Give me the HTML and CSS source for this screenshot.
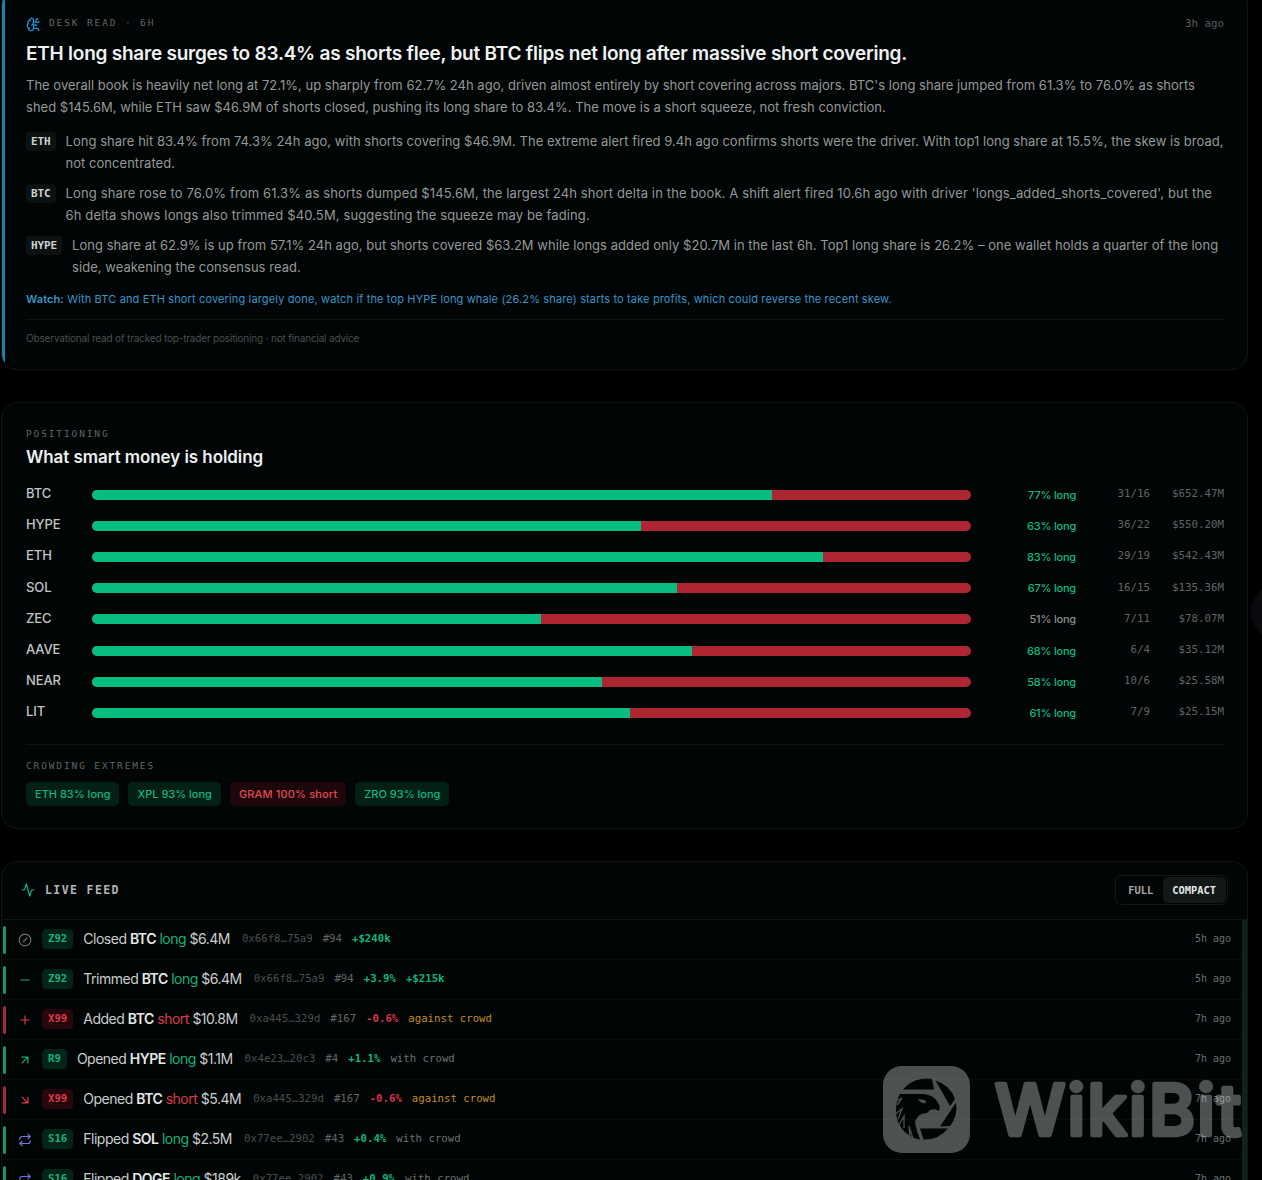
FILE: index.html
```html
<!DOCTYPE html>
<html lang="en">
<head>
  <meta charset="UTF-8">
  <meta name="viewport" content="width=device-width, initial-scale=1.0">
  <title>Smart Money Desk</title>
  <link rel="stylesheet" href="styles.css">
</head>
<body>
  <!-- Shared icons -->
  <svg class="sprite">
    <symbol id="i-brain" viewBox="0 0 24 24">
      <path d="M12 5a3 3 0 1 0-5.997.125 4 4 0 0 0-2.526 5.77 4 4 0 0 0 .556 6.588A4 4 0 1 0 12 18Z"/>
      <path d="M9 13a4.5 4.5 0 0 0 3-4M6 5.1a3 3 0 0 0 .4 1.4M3.5 10.9a4 4 0 0 1 .6-.4M6 18a4 4 0 0 1-2-.5"/>
      <path d="M12 13h4M12 18h6a2 2 0 0 1 2 2v1M12 8h8M16 8V5a2 2 0 0 1 2-2"/>
      <circle cx="16" cy="13" r=".5"/><circle cx="18" cy="3" r=".5"/><circle cx="20" cy="21" r=".5"/><circle cx="20" cy="8" r=".5"/>
    </symbol>
    <symbol id="i-activity" viewBox="0 0 24 24"><path d="M22 12h-2.48a2 2 0 0 0-1.93 1.46l-2.35 8.36a.25.25 0 0 1-.48 0L9.24 2.18a.25.25 0 0 0-.48 0l-2.35 8.36A2 2 0 0 1 4.49 12H2"/></symbol>
    <symbol id="i-closed" viewBox="0 0 24 24"><circle cx="12" cy="12" r="10"/><path d="m9 15 6-6"/></symbol>
    <symbol id="i-minus" viewBox="0 0 24 24"><path d="M5 12h14"/></symbol>
    <symbol id="i-plus" viewBox="0 0 24 24"><path d="M5 12h14M12 5v14"/></symbol>
    <symbol id="i-up" viewBox="0 0 24 24"><path d="M7 7h10v10M7 17 17 7"/></symbol>
    <symbol id="i-down" viewBox="0 0 24 24"><path d="m7 7 10 10M17 7v10H7"/></symbol>
    <symbol id="i-flip" viewBox="0 0 24 24"><path d="m17 2 4 4-4 4M3 11v-1a4 4 0 0 1 4-4h14M7 22l-4-4 4-4M21 13v1a4 4 0 0 1-4 4H3"/></symbol>
  </svg>

  <main class="page">
    <section class="card desk">
      <div class="desk-top">
        <svg class="icon desk-icon"><use href="#i-brain"/></svg>
        <span class="eyebrow">DESK READ · 6H</span>
        <span class="ago">3h ago</span>
      </div>
      <h1>ETH long share surges to 83.4% as shorts flee, but BTC flips net long after massive short covering.</h1>
      <p class="summary">The overall book is heavily net long at 72.1%, up sharply from 62.7% 24h ago, driven almost entirely by short covering across majors. BTC's long share jumped from 61.3% to 76.0% as shorts<br>shed $145.6M, while ETH saw $46.9M of shorts closed, pushing its long share to 83.4%. The move is a short squeeze, not fresh conviction.</p>
      <ul class="notes">
        <li><span class="tag">ETH</span><p>Long share hit 83.4% from 74.3% 24h ago, with shorts covering $46.9M. The extreme alert fired 9.4h ago confirms shorts were the driver. With top1 long share at 15.5%, the skew is broad,<br>not concentrated.</p></li>
        <li><span class="tag">BTC</span><p class="wide">Long share rose to 76.0% from 61.3% as shorts dumped $145.6M, the largest 24h short delta in the book. A shift alert fired 10.6h ago with driver 'longs_added_shorts_covered', but the<br>6h delta shows longs also trimmed $40.5M, suggesting the squeeze may be fading.</p></li>
        <li><span class="tag">HYPE</span><p>Long share at 62.9% is up from 57.1% 24h ago, but shorts covered $63.2M while longs added only $20.7M in the last 6h. Top1 long share is 26.2% – one wallet holds a quarter of the long<br>side, weakening the consensus read.</p></li>
      </ul>
      <p class="watch"><b>Watch:</b> With BTC and ETH short covering largely done, watch if the top HYPE long whale (26.2% share) starts to take profits, which could reverse the recent skew.</p>
      <p class="disclaimer">Observational read of tracked top-trader positioning · not financial advice</p>
    </section>

    <section class="card positioning">
      <div class="eyebrow">POSITIONING</div>
      <h2>What smart money is holding</h2>
      <div class="rows">
        <div class="row"><span class="coin">BTC</span><div class="bar"><div class="fill" style="width: 77.4%"></div></div><span class="pct">77% long</span><span class="num">31/16</span><span class="num">$652.47M</span></div>
        <div class="row"><span class="coin">HYPE</span><div class="bar"><div class="fill" style="width: 62.5%"></div></div><span class="pct">63% long</span><span class="num">36/22</span><span class="num">$550.20M</span></div>
        <div class="row"><span class="coin">ETH</span><div class="bar"><div class="fill" style="width: 83.2%"></div></div><span class="pct">83% long</span><span class="num">29/19</span><span class="num">$542.43M</span></div>
        <div class="row"><span class="coin">SOL</span><div class="bar"><div class="fill" style="width: 66.5%"></div></div><span class="pct">67% long</span><span class="num">16/15</span><span class="num">$135.36M</span></div>
        <div class="row"><span class="coin">ZEC</span><div class="bar"><div class="fill" style="width: 51.1%"></div></div><span class="pct neutral">51% long</span><span class="num">7/11</span><span class="num">$78.07M</span></div>
        <div class="row"><span class="coin">AAVE</span><div class="bar"><div class="fill" style="width: 68.3%"></div></div><span class="pct">68% long</span><span class="num">6/4</span><span class="num">$35.12M</span></div>
        <div class="row"><span class="coin">NEAR</span><div class="bar"><div class="fill" style="width: 58%"></div></div><span class="pct">58% long</span><span class="num">10/6</span><span class="num">$25.58M</span></div>
        <div class="row"><span class="coin">LIT</span><div class="bar"><div class="fill" style="width: 61.2%"></div></div><span class="pct">61% long</span><span class="num">7/9</span><span class="num">$25.15M</span></div>
      </div>
      <div class="extremes">
        <div class="eyebrow">CROWDING EXTREMES</div>
        <div class="pills">
          <span class="pill">ETH 83% long</span>
          <span class="pill">XPL 93% long</span>
          <span class="pill red">GRAM 100% short</span>
          <span class="pill">ZRO 93% long</span>
        </div>
      </div>
    </section>

    <section class="card feed">
      <header class="feed-top">
        <svg class="icon feed-icon"><use href="#i-activity"/></svg>
        <span class="feed-title">LIVE FEED</span>
        <div class="toggle"><button>FULL</button><button class="active">COMPACT</button></div>
      </header>
      <div class="feed-list">
        <div class="event long"><svg class="icon muted"><use href="#i-closed"/></svg><span class="badge">Z92</span><span class="what">Closed <b>BTC</b> <i>long</i> $6.4M</span><span class="addr">0x66f8…75a9</span><span class="rank">#94</span><span class="gain">+$240k</span><span class="time">5h ago</span></div>
        <div class="event long"><svg class="icon"><use href="#i-minus"/></svg><span class="badge">Z92</span><span class="what">Trimmed <b>BTC</b> <i>long</i> $6.4M</span><span class="addr">0x66f8…75a9</span><span class="rank">#94</span><span class="gain">+3.9%</span><span class="gain">+$215k</span><span class="time">5h ago</span></div>
        <div class="event short"><svg class="icon"><use href="#i-plus"/></svg><span class="badge">X99</span><span class="what">Added <b>BTC</b> <i>short</i> $10.8M</span><span class="addr">0xa445…329d</span><span class="rank">#167</span><span class="loss">-0.6%</span><span class="against">against crowd</span><span class="time">7h ago</span></div>
        <div class="event long"><svg class="icon"><use href="#i-up"/></svg><span class="badge">R9</span><span class="what">Opened <b>HYPE</b> <i>long</i> $1.1M</span><span class="addr">0x4e23…20c3</span><span class="rank">#4</span><span class="gain">+1.1%</span><span class="with">with crowd</span><span class="time">7h ago</span></div>
        <div class="event short"><svg class="icon"><use href="#i-down"/></svg><span class="badge">X99</span><span class="what">Opened <b>BTC</b> <i>short</i> $5.4M</span><span class="addr">0xa445…329d</span><span class="rank">#167</span><span class="loss">-0.6%</span><span class="against">against crowd</span><span class="time">7h ago</span></div>
        <div class="event long"><svg class="icon flip"><use href="#i-flip"/></svg><span class="badge">S16</span><span class="what">Flipped <b>SOL</b> <i>long</i> $2.5M</span><span class="addr">0x77ee…2902</span><span class="rank">#43</span><span class="gain">+0.4%</span><span class="with">with crowd</span><span class="time">7h ago</span></div>
        <div class="event long"><svg class="icon flip"><use href="#i-flip"/></svg><span class="badge">S16</span><span class="what">Flipped <b>DOGE</b> <i>long</i> $189k</span><span class="addr">0x77ee…2902</span><span class="rank">#43</span><span class="gain">+0.9%</span><span class="with">with crowd</span><span class="time">7h ago</span></div>
      </div>
    </section>
  </main>

  <div class="side-handle"></div>

  <svg class="watermark" viewBox="0 0 362 90">
    <defs>
      <mask id="eagle">
        <rect width="90" height="90" fill="#fff"/>
        <!-- shutter blades -->
        <path d="M21 24.500A30.300 30.300 0 0 1 50 14l2 10.500z"/>
        <path d="M53.500 15.500A30.300 30.300 0 0 1 73 34l-5 7z"/>
        <path d="M74 37.500A30.300 30.300 0 0 1 68 61l-10 .500z"/>
        <path d="M38 63.500h28A30.300 30.300 0 0 1 41.500 74.500z"/>
        <!-- head and feathers -->
        <path d="M18 29h24c7 1 12 4 14 9 2 2 2 5 1 8-3-2-6-2-9-1l-3 3c-7 0-11 4-12 10l2 8 3 8.500C24 72 14 60 14 46c0-6 1-12 4-17z"/>
        <path d="M36 34l7 1 1 3c-3 1-7-1-8-4z" fill="#fff"/>
        <path d="m12 37 8-4-5 7M12 50l8-6-4 10M17 60l5-9v12M28 73l-1-12 4 13" fill="none" stroke="#fff" stroke-width="1.300"/>
      </mask>
    </defs>
    <g opacity=".3">
      <rect x="1" y="1" width="87" height="87" rx="19" fill="#fff" mask="url(#eagle)"/>
      <text class="watermark-text" x="113" y="69.500" textLength="246" lengthAdjust="spacing">WikiBit</text>
    </g>
  </svg>
</body>
</html>
```
FILE: styles.css
```css
* {
  box-sizing: border-box;
}
body {
  margin: 0;
  height: 1180px;
  overflow: hidden;
  background: #000;
  color: #d4d6d6;
  font-family: Inter, sans-serif;
  font-size: 13px;
}
h1, h2, p, ul {
  margin: 0;
  padding: 0;
}
.sprite {
  display: none;
}
.icon {
  flex: none;
  width: 14px;
  height: 14px;
  fill: none;
  stroke: currentColor;
  stroke-width: 2;
  stroke-linecap: round;
  stroke-linejoin: round;
}
.page {
  display: flex;
  flex-direction: column;
  gap: 32px;
  width: 1247px;
  height: 1191px;
  overflow: hidden;
  margin: -11px 0 0 1px;
}
.card {
  flex: none;
  background: #010505;
  border: 1px solid #101515;
  border-radius: 16px;
}
.eyebrow {
  font: 9.5px/14px "DejaVu Sans Mono", monospace;
  letter-spacing: 1.87px;
  color: #626666;
}

/* Desk read */
.desk {
  position: relative;
  height: 381px;
  padding: 24px 23px 0 24px;
  overflow: hidden;
}
.desk::before {
  content: "";
  position: absolute;
  top: 0;
  bottom: 6px;
  left: 0;
  width: 3px;
  border-radius: 3px;
  background: #227fa8;
}
.desk-top {
  display: flex;
  align-items: center;
  height: 18px;
}
.desk-icon {
  width: 15px;
  height: 15px;
  margin: 2px 8px 0 0;
  color: #2590cf;
}
.ago {
  margin-left: auto;
  font: 10.8px "DejaVu Sans Mono", monospace;
  color: #5a5e5e;
}
h1 {
  margin-top: 9px;
  font-size: 19px;
  line-height: 26px;
  font-weight: 600;
  letter-spacing: -0.235px;
  white-space: nowrap;
  color: #f0f2f2;
}
.summary, .notes {
  line-height: 21.7px;
  letter-spacing: 0.015px;
  white-space: nowrap;
  color: #959898;
}
.summary {
  margin-top: 8px;
}
.notes {
  list-style: none;
  margin-top: 13px;
}
.notes li {
  display: flex;
  align-items: flex-start;
  gap: 10px;
  margin-bottom: 8.6px;
}
.notes p {
  letter-spacing: 0.03px;
}
.notes .wide {
  letter-spacing: 0.13px;
}
.tag {
  margin-top: 1px;
  padding: 0 5px;
  border-radius: 4px;
  background: #0c1111;
  font: bold 11px/19px "DejaVu Sans Mono", monospace;
  letter-spacing: -0.1px;
  color: #cfd1d1;
}
.watch {
  margin-top: 11px;
  font-size: 11px;
  line-height: 18px;
  letter-spacing: 0.14px;
  white-space: nowrap;
  color: #3a94c6;
}
.watch b {
  font-weight: 600;
  letter-spacing: 0.1px;
}
.disclaimer {
  margin-top: 11px;
  padding-top: 10px;
  border-top: 1px solid #0e1313;
  font-size: 10px;
  line-height: 16px;
  letter-spacing: -0.18px;
  color: #4b4f4f;
}

/* Positioning */
.positioning {
  height: 427px;
  padding: 24px 22px 0 24px;
}
h2 {
  margin-top: 5px;
  font-size: 17px;
  line-height: 22px;
  font-weight: 600;
  letter-spacing: -0.07px;
  color: #ecefef;
}
.rows {
  margin-top: 11px;
}
.row {
  display: grid;
  grid-template-columns: 66px 879px 105px 74px 74px;
  align-items: center;
  height: 31.2px;
}
.coin {
  margin-top: -3px;
  font-weight: 500;
  letter-spacing: -0.1px;
  color: #c3c6c6;
}
.bar {
  height: 10px;
  border-radius: 5px;
  overflow: hidden;
  background: #ae2631;
}
.fill {
  height: 100%;
  background: #08bd82;
}
.pct {
  font-size: 11px;
  font-weight: 500;
  letter-spacing: -0.2px;
  text-align: right;
  color: #10b981;
}
.pct.neutral {
  color: #8b8e8e;
}
.num {
  margin-top: -2px;
  font: 10.8px "DejaVu Sans Mono", monospace;
  text-align: right;
  color: #606464;
}
.extremes {
  margin-top: 15px;
  padding-top: 14px;
  border-top: 1px solid #0e1313;
}
.pills {
  display: flex;
  gap: 9px;
  margin-top: 9px;
}
.pill {
  padding: 0 9px;
  border-radius: 5px;
  background: #032017;
  font-size: 11px;
  line-height: 24px;
  font-weight: 500;
  color: #12b47e;
}
.pill.red {
  background: #1d070b;
  color: #e04a50;
  letter-spacing: 0.15px;
}

/* Live feed */
.feed {
  height: 420px;
  overflow: hidden;
}
.feed-top {
  display: flex;
  align-items: center;
  height: 58px;
  padding: 0 19px 1px 19px;
  border-bottom: 1px solid #101515;
}
.feed-icon {
  margin-right: 10px;
  color: #14b886;
}
.feed-title {
  font: bold 11.5px "DejaVu Sans Mono", monospace;
  letter-spacing: 1.4px;
  color: #b2b5b5;
}
.toggle {
  display: flex;
  margin-left: auto;
  padding: 1px;
  border: 1px solid #121717;
  border-radius: 6px;
}
.toggle button {
  padding: 0 10px 0 11px;
  border: 0;
  border-radius: 5px;
  background: none;
  font: bold 10.4px/26px "DejaVu Sans Mono", monospace;
  color: #a5a8a8;
}
.toggle .active {
  padding: 0 10px 0 9px;
  background: #121717;
  color: #e6e8e8;
}
.feed-list {
  border-right: 5px solid #0c251b;
}
.event {
  display: flex;
  align-items: center;
  gap: 10px;
  height: 40px;
  padding: 0 11px 2px 17px;
  border-bottom: 1px solid #090d0d;
  font: 10.7px "DejaVu Sans Mono", monospace;
  color: #4a4e4e;
}
.event::before {
  content: "";
  width: 3px;
  height: 28px;
  margin: 2px 2px 0 -16px;
  border-radius: 2px;
  background: #19966b;
}
.event.short::before {
  background: #a12c3d;
}
.long {
  --side: #16b17d;
  --side-bg: #04231a;
}
.short {
  --side: #dc3c48;
  --side-bg: #27070b;
}
.event .icon {
  margin: 2px 0 0 0;
  color: var(--side);
}
.event .icon.muted {
  color: #6b6f6f;
}
.event .icon.flip {
  color: #7c6fd8;
}
.badge {
  padding: 0 5px;
  border: 1px solid var(--side-bg);
  border-radius: 4px;
  background: var(--side-bg);
  font-weight: bold;
  line-height: 18px;
  color: var(--side);
}
.what {
  font: 14px Inter, sans-serif;
  letter-spacing: -0.5px;
  color: #cbcece;
  margin-right: 2px;
}
.what b {
  font-weight: 600;
  color: #e6e8e8;
}
.what i {
  font-style: normal;
  color: var(--side);
}
.rank {
  color: #626666;
}
.gain {
  font-weight: bold;
  color: #14b27d;
}
.loss {
  font-weight: bold;
  color: #d83350;
}
.against {
  color: #c08d25;
}
.with {
  color: #6c7070;
}
.time {
  margin-left: auto;
  font-size: 10px;
  color: #6c7070;
}

/* Overlays */
.side-handle {
  position: absolute;
  top: 582px;
  left: 1251px;
  width: 60px;
  height: 60px;
  border-radius: 50%;
  background: #080a0e;
}
.watermark {
  position: absolute;
  top: 1065px;
  left: 882px;
  width: 362px;
  height: 90px;
}
.watermark-text {
  font: 500 70px Inter, sans-serif;
  fill: #fff;
  stroke: #fff;
  stroke-width: 4.5px;
  stroke-linejoin: round;
}
```
